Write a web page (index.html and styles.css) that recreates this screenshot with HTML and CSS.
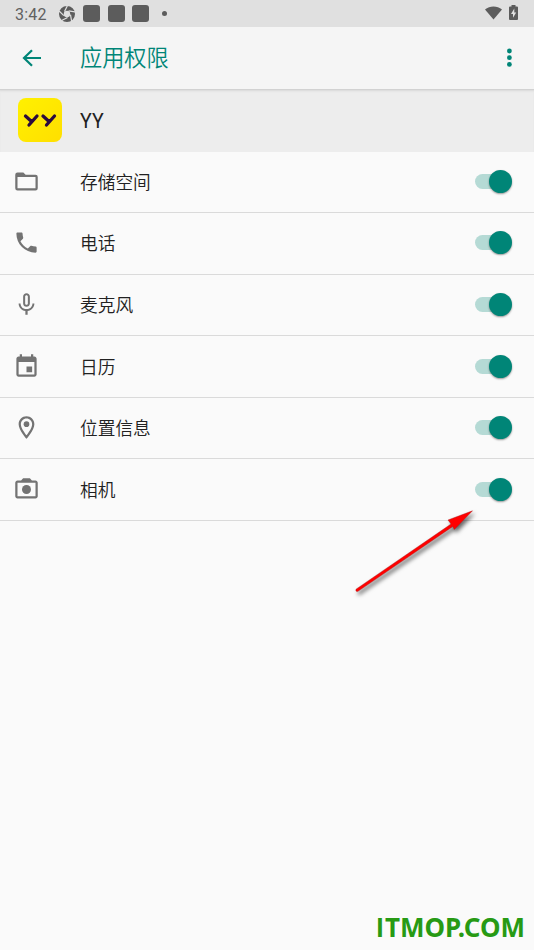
FILE: index.html
```html
<!DOCTYPE html>
<html lang="zh-CN">
<head>
<meta charset="utf-8">
<title>应用权限</title>
<link rel="stylesheet" href="styles.css">
</head>
<body>
<div class="screen">
  <header class="status">
    <span class="time">3:42</span>
    <svg class="shutter" viewBox="0 0 16 16"><circle cx="8" cy="8" r="5.600" fill="none" stroke="#5c5c5c" stroke-width="4.800"/><g stroke="#e0e0e0" stroke-width="1.200"><path id="gap" d="M5.500 5.500 8.500-.5"/><use href="#gap" transform="rotate(72 8 8)"/><use href="#gap" transform="rotate(144 8 8)"/><use href="#gap" transform="rotate(216 8 8)"/><use href="#gap" transform="rotate(288 8 8)"/></g></svg>
    <i class="block"></i><i class="block"></i><i class="block"></i>
    <i class="dot"></i>
    <svg class="wifi" viewBox="0 0 18 14"><path d="M0 3.200C5-.9 13-.9 18 3.200L9 14z"/></svg>
    <svg class="battery" viewBox="0 0 9 15"><path d="M2.500 0h4v1.500H8q1 0 1 1V14q0 1-1 1H1q-1 0-1-1V2.500q0-1 1-1h1.500z"/><path d="M5.300 3.500 2 9h2v3.700L7.200 7.500H5.300z" fill="#e0e0e0"/></svg>
  </header>
  <div class="toolbar">
    <svg class="back" viewBox="0 0 20 18"><path d="M19 9H2M10 1.200 2 9l8 7.800" fill="none" stroke="#008577" stroke-width="2.200"/></svg>
    <h1>应用权限</h1>
    <svg class="more" viewBox="0 0 6 20"><circle cx="3.400" cy="3" r="2.400"/><circle cx="3.400" cy="9.700" r="2.400"/><circle cx="3.400" cy="16.400" r="2.400"/></svg>
  </div>
  <div class="app">
    <svg class="logo" viewBox="0 0 44 44"><defs><linearGradient id="y" x2="1" y2="1"><stop stop-color="#fff100"/><stop offset="1" stop-color="#ffdf00"/></linearGradient></defs><rect width="44" height="44" rx="8" fill="url(#y)"/><path d="M7.500 18l6 5.400M19 18l-8 9M25 18l6 5.400M36.500 18l-8 9" fill="none" stroke="#2b0a3d" stroke-width="3.300" stroke-linecap="round"/></svg>
    <span>YY</span>
  </div>
  <main>
    <div class="row"><svg class="icon" viewBox="0 0 24 24"><path d="M4 4h5.200l2 2H20q2 0 2 2v10q0 2-2 2H4q-2 0-2-2V6q0-2 2-2zM4 8v10h16V8z" fill-rule="evenodd"/></svg><span>存储空间</span><i class="switch"></i></div>
    <div class="row"><svg class="icon" viewBox="0 0 24 24"><path d="M6.620 10.790c1.440 2.830 3.760 5.140 6.590 6.590l2.200-2.200c.27-.27.670-.36 1.020-.24 1.120.37 2.330.57 3.570.57.550 0 1 .45 1 1V20c0 .55-.45 1-1 1C10.610 21 3 13.390 3 4c0-.55.45-1 1-1h3.500c.55 0 1 .45 1 1 0 1.250.2 2.450.57 3.570.11.350.03.740-.25 1.020l-2.200 2.200z"/></svg><span>电话</span><i class="switch"></i></div>
    <div class="row"><svg class="icon" viewBox="0 0 24 24"><path d="M12 14c1.660 0 3-1.340 3-3V5c0-1.660-1.340-3-3-3S9 3.340 9 5v6c0 1.660 1.340 3 3 3zM10.800 4.900c0-.66.54-1.200 1.200-1.200s1.200.54 1.200 1.200v6.200c0 .66-.53 1.200-1.200 1.200s-1.200-.54-1.200-1.200zM17.300 11c0 3-2.540 5.100-5.300 5.100S6.700 14 6.700 11H5c0 3.410 2.720 6.230 6 6.720V21h2v-3.280c3.280-.48 6-3.300 6-6.720z" fill-rule="evenodd"/></svg><span>麦克风</span><i class="switch"></i></div>
    <div class="row"><svg class="icon" viewBox="0 0 24 24"><path d="M17 12h-5v5h5v-5zM16 1v2H8V1H6v2H5c-1.110 0-1.990.9-1.990 2L3 19c0 1.100.89 2 2 2h14c1.100 0 2-.9 2-2V5c0-1.100-.9-2-2-2h-1V1h-2zm3 18H5V8h14v11z"/></svg><span>日历</span><i class="switch"></i></div>
    <div class="row"><svg class="icon" viewBox="0 0 24 24"><path d="M12 2C8.130 2 5 5.130 5 9c0 5.250 7 13 7 13s7-7.750 7-13c0-3.870-3.130-7-7-7zM7 9c0-2.760 2.240-5 5-5s5 2.240 5 5c0 2.880-2.880 7.190-5 9.880C9.920 16.210 7 11.850 7 9z"/><circle cx="12" cy="9" r="2.500"/></svg><span>位置信息</span><i class="switch"></i></div>
    <div class="row"><svg class="icon" viewBox="0 0 24 24"><path d="M20 4h-3.170L15 2H9L7.170 4H4c-1.100 0-2 .9-2 2v12c0 1.100.9 2 2 2h16c1.100 0 2-.9 2-2V6c0-1.100-.9-2-2-2zm0 14H4V6h16z"/><circle cx="12" cy="12" r="4"/></svg><span>相机</span><i class="switch"></i></div>
  </main>
  <svg class="arrow" viewBox="0 0 134 98"><path d="M6 79.200 101 14 98 10 122.500.8 104.300 19.500 102.800 16.500 7.600 81.600Q5.200 81.500 6 79.200z" fill="red" stroke="#a01818" stroke-width=".4"/></svg>
  <div class="watermark"><span>I</span>TMOP.COM</div>
</div>
</body>
</html>
```
FILE: styles.css
```css
* { box-sizing: border-box; }
body { margin: 0; background: #fafafa; color: #212121; font-family: Roboto, "Noto Sans CJK SC", sans-serif; }
.screen { position: relative; height: 950px; overflow: hidden; }
svg { display: block; flex: none; }
.status { display: flex; align-items: center; height: 27px; padding: 0 16px 0 15px; background: #e0e0e0; }
.status svg { fill: #5c5c5c; }
.time { width: 44px; font-size: 16px; line-height: 27px; color: #616161; letter-spacing: .2px; padding-top: 1px; }
.shutter { width: 16px; height: 16px; margin-right: 8px; }
.block { width: 17px; height: 17px; margin-right: 7.500px; border-radius: 3px; background: #5c5c5c; }
.dot { width: 5px; height: 5px; margin-left: 5px; border-radius: 50%; background: #5c5c5c; }
.status .wifi { width: 17px; height: 14px; margin-left: auto; margin-right: 7px; margin-top: -1px; }
.status .battery { width: 9px; height: 15px; margin-top: -2px; }
.toolbar { display: flex; align-items: center; height: 63px; padding: 0 22px 0 22px; background: #f5f5f5; color: #008577; border-bottom: 1px solid #d2d2d2; }
.back { width: 20px; height: 18px; }
h1 { flex: 1; margin: 0 0 0 38px; padding-bottom: 4px; font-size: 22.200px; line-height: 30px; font-weight: 350; font-family: "Noto Sans CJK SC", sans-serif; }
.more { width: 6px; height: 20px; fill: #008577; }
.app { display: flex; align-items: center; height: 61.500px; padding: 0 0 1px 18px; background: #ededed; box-shadow: inset 0 2px 2px -1px #dadada; }
.logo { width: 44px; height: 44px; }
.app span { margin-left: 18px; padding-top: 3px; font-size: 19.500px; }
.row { display: flex; align-items: center; height: 61.600px; padding: 0 22px 0 13px; border-bottom: 1.500px solid #dadada; }
.icon { width: 27px; height: 27px; margin-top: -1px; fill: #737373; }
.row span { flex: 1; margin-left: 40px; padding-top: 2px; font-size: 17.700px; line-height: 26px; font-weight: 350; }
.switch { position: relative; width: 38px; height: 24px; }
.switch::before { content: ""; position: absolute; left: 1px; top: 4px; width: 32px; height: 15px; border-radius: 8px; background: #b5dad5; }
.switch::after { content: ""; position: absolute; right: 0; top: 0; width: 23px; height: 23px; border-radius: 50%; background: #008577; box-shadow: 0 1px 2px rgba(0,0,0,.4); }
.arrow { position: absolute; left: 350px; top: 510px; width: 134px; height: 98px; filter: drop-shadow(2px 3px 2px rgba(0,0,0,.6)); }
.watermark { position: absolute; right: 9px; bottom: 5px; font: 700 26px/36px "Noto Sans", sans-serif; color: #279a14; }
.watermark span { font-family: "Noto Sans CJK SC", sans-serif; font-size: 25.500px; line-height: 1; letter-spacing: .7px; }
```
